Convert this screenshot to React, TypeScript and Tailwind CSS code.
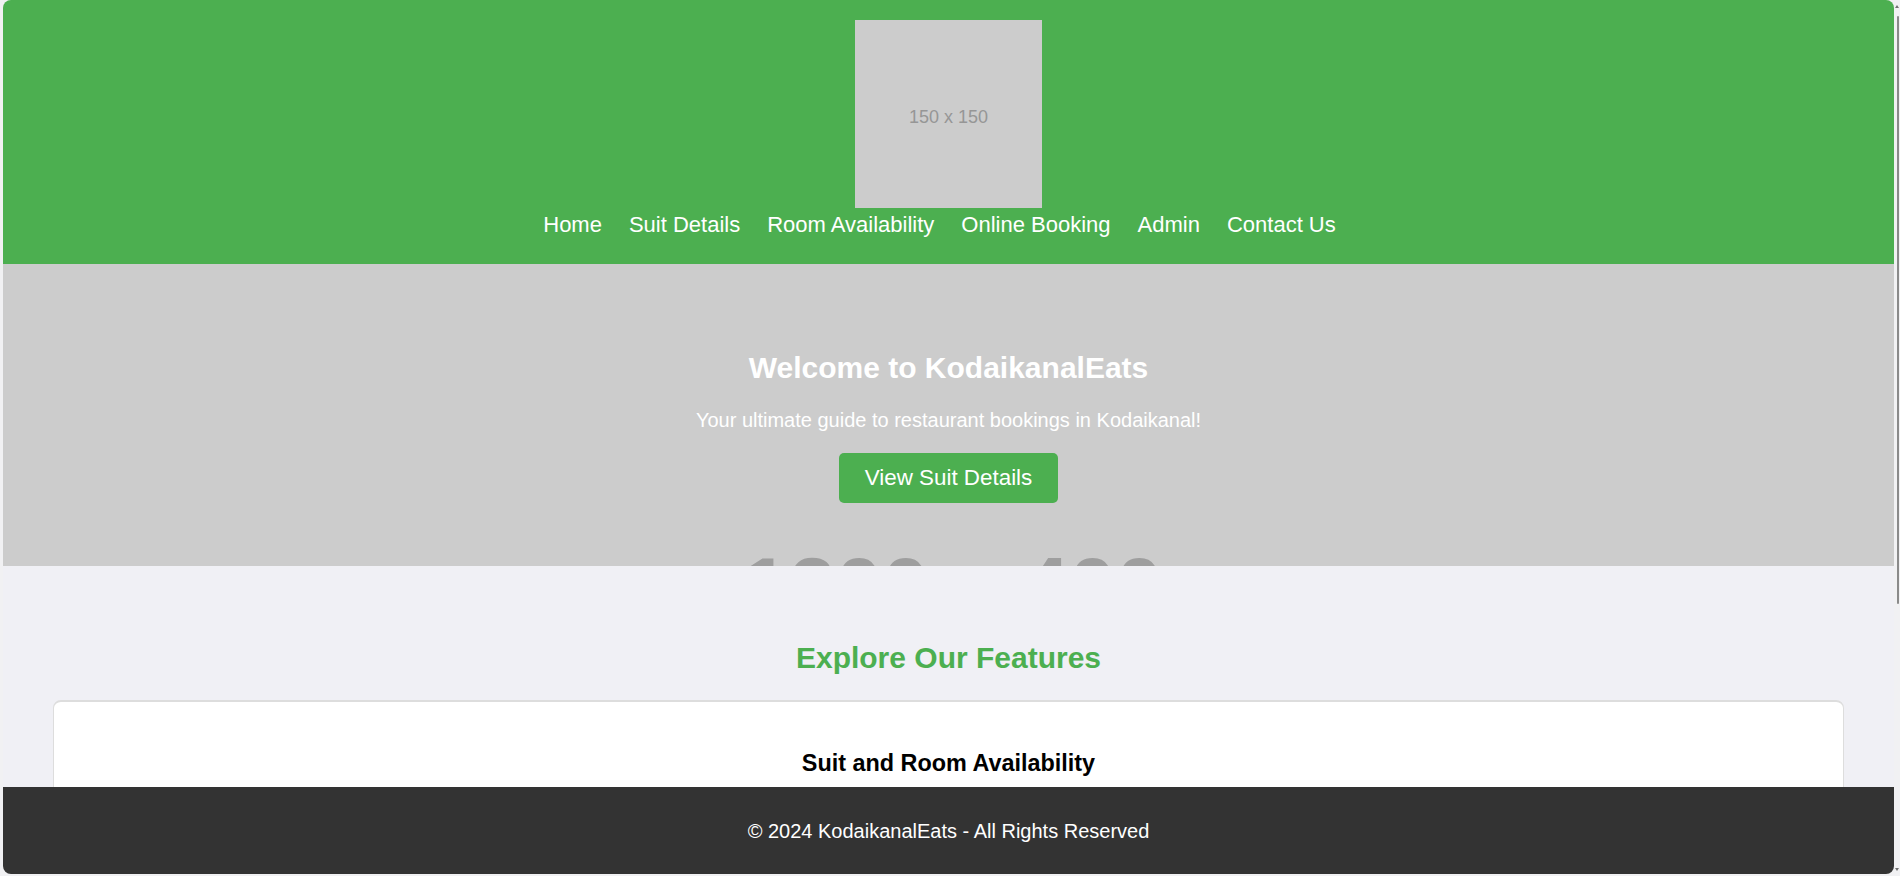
import React from "react";

const navItems = ["Home", "Suit Details", "Room Availability", "Online Booking", "Admin", "Contact Us"];

export default function App() {
  return (
    <div className="w-[1900px] h-[876px] bg-[#f1f1f3] flex overflow-hidden font-['Liberation_Sans',Arial,sans-serif]">
      <div className="ml-[3px] w-[1891px] h-[874px] rounded-[8px] overflow-hidden flex flex-col">
        <div className="flex-1 min-h-0 overflow-hidden flex flex-col">
          {/* Header */}
          <header className="h-[264px] shrink-0 bg-[#4CAF50] pt-[20px] flex flex-col items-center">
            <div className="w-[187px] h-[188px] bg-[#cccccc] flex items-center justify-center pt-[6px] text-[18px] text-[#969696]">
              150 x 150
            </div>
            <nav className="mt-[4px] pr-[18px] flex gap-[27px] text-[22px] leading-[25px] text-white">
              {navItems.map((n) => (
                <a key={n} href="#" className="whitespace-nowrap">
                  {n}
                </a>
              ))}
            </nav>
          </header>

          {/* Hero */}
          <section className="relative h-[302px] shrink-0 bg-[#cccccc] overflow-hidden flex flex-col items-center pt-[87px]">
            <span className="absolute left-0 right-0 top-[281px] pl-[8px] text-center text-[84px] leading-none font-bold text-[#9e9e9e] whitespace-nowrap">
              1200 x 400
            </span>
            <h1 className="relative text-[30px] leading-[34px] font-bold text-white">Welcome to KodaikanalEats</h1>
            <p className="relative mt-[24px] text-[20px] leading-[22px] text-white">
              Your ultimate guide to restaurant bookings in Kodaikanal!
            </p>
            <button className="relative mt-[22px] w-[219px] h-[50px] rounded-[5px] bg-[#4CAF50] text-white text-[22.4px] leading-[25px] pb-[2px]">
              View Suit Details
            </button>
          </section>

          {/* Features */}
          <section className="flex-1 bg-[#f0f0f5] px-[50px] pt-[74px]">
            <h2 className="text-center text-[30px] leading-[36px] font-bold text-[#4CAF50]">Explore Our Features</h2>
            <div className="mt-[24px] h-[300px] bg-white border border-[#dddddd] border-t-2 rounded-[8px] pt-[47px]">
              <h3 className="text-center text-[23.4px] leading-[28px] font-bold text-black">Suit and Room Availability</h3>
            </div>
          </section>
        </div>

        {/* Footer */}
        <footer className="h-[87px] shrink-0 bg-[#333333] flex items-center justify-center text-white text-[20px]">
          © 2024 KodaikanalEats - All Rights Reserved
        </footer>
      </div>

      {/* Scrollbar */}
      <div className="w-[6px] h-[876px] bg-[#f1f1f3] flex flex-col items-end pr-[1px]">
        <div className="mt-[5px] w-0 h-0 border-l-[2px] border-r-[2px] border-b-[3px] border-l-transparent border-r-transparent border-b-[#707070]" />
        <div className="mt-[8px] w-[2px] h-[588px] rounded-full bg-[#8a8a8a]" />
        <div className="flex-1" />
        <div className="mb-[5px] w-0 h-0 border-l-[2px] border-r-[2px] border-t-[3px] border-l-transparent border-r-transparent border-t-[#707070]" />
      </div>
    </div>
  );
}
